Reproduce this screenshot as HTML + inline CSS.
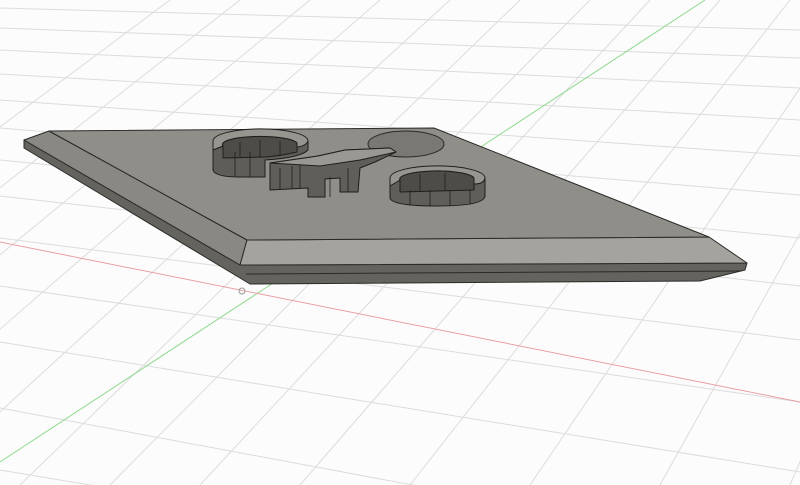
<!DOCTYPE html>
<html><head><meta charset="utf-8"><style>html,body{margin:0;padding:0;background:#fff;width:800px;height:485px;overflow:hidden}</style></head>
<body>
<svg width="800" height="485" viewBox="0 0 800 485" xmlns="http://www.w3.org/2000/svg" style="display:block">
<rect width="800" height="485" fill="#fcfcfc"/>
<g stroke="#dcdcdc" stroke-width="1" fill="none">
<line x1="0" y1="8" x2="800" y2="30"/>
<line x1="0" y1="28" x2="800" y2="58"/>
<line x1="0" y1="50" x2="800" y2="88"/>
<line x1="0" y1="74" x2="800" y2="120"/>
<line x1="0" y1="100" x2="800" y2="156"/>
<line x1="0" y1="128" x2="800" y2="195"/>
<line x1="0" y1="160" x2="800" y2="238"/>
<line x1="0" y1="196" x2="800" y2="286"/>
<line x1="0" y1="238" x2="800" y2="340"/>
<line x1="0" y1="286" x2="800" y2="402"/>
<line x1="0" y1="342" x2="800" y2="472"/>
<line x1="0" y1="408" x2="600" y2="520"/>
<line x1="0" y1="470" x2="300" y2="520"/>
<line x1="20" y1="485" x2="520" y2="0"/>
<line x1="110" y1="485" x2="590" y2="0"/>
<line x1="200" y1="485" x2="650" y2="0"/>
<line x1="300" y1="485" x2="720" y2="0"/>
<line x1="410" y1="485" x2="790" y2="0"/>
<line x1="530" y1="485" x2="860" y2="0"/>
<line x1="660" y1="485" x2="930" y2="0"/>
<line x1="790" y1="485" x2="1000" y2="0"/>
<line x1="-80" y1="485" x2="450" y2="0"/>
<line x1="-180" y1="485" x2="380" y2="0"/>
<line x1="-280" y1="485" x2="310" y2="0"/>
<line x1="-380" y1="485" x2="240" y2="0"/>
<line x1="-480" y1="485" x2="170" y2="0"/>
</g>
<line x1="0" y1="462" x2="705" y2="0" stroke="#8fd98f" stroke-width="1"/>
<line x1="0" y1="242" x2="800" y2="402" stroke="#e9a0a0" stroke-width="1"/>
<circle cx="242" cy="291" r="3" fill="none" stroke="#999"/>
<g stroke="#2a2a28" stroke-width="1" stroke-linejoin="round">
<polygon points="24,140 240,265 747,263 745,270 700,281 250,284 24,148" fill="#65635e"/>
<line x1="246" y1="274" x2="742" y2="271"/>
<polygon points="24,140 49,131 247,240 240,265" fill="#8a8882"/>
<polygon points="247,240 709,237 747,263 240,265" fill="#a5a39d"/>
<polygon points="49,131 434,128 709,237 247,240" fill="#908e88"/>
</g>
<ellipse cx="406" cy="144" rx="38" ry="13" fill="#7a7873" stroke="#2a2a28"/>
<g stroke="#1e1e1c" stroke-width="1" stroke-linejoin="round">
<!-- left C -->
<path d="M213,141 L213,170 Q215,177 240,177 L265,177 L265,160 Q300,158 308,150 L308,141 Z" fill="#5f5d59"/>
<path d="M223,146 A37,8 0 0 1 297,143 L297,152 Q280,156 265,157 L223,158 Z" fill="#4e4c48"/>
<path d="M213,141 A47,12 0 0 1 308,141 Q306,146 297,147 L297,143 A37,8 0 0 0 223,146 L213,150 Z" fill="#97958f"/>
<!-- middle -->
<path d="M270,163 L318,156 L345,150 L390,148 L396,152 L375,162 L360,168 L358,192 L340,192 L340,178 L325,179 L325,197 L308,197 L308,188 L270,190 Z" fill="#605e5a"/>
<path d="M270,163 L318,156 L345,150 L390,148 L396,152 L360,160 L320,166 Z" fill="#9a9892"/>
<!-- right C -->
<path d="M390,178 L390,198 Q392,206 437,206 Q484,206 485,196 L485,178 Z" fill="#605e5a"/>
<path d="M400,180 A37,8 0 0 1 474,178 L474,190 L400,192 Z" fill="#4e4c48"/>
<path d="M390,178 A47,12 0 0 1 485,178 Q484,184 474,184 L474,178 A37,8 0 0 0 400,180 L390,186 Z" fill="#97958f"/>
</g>
<g stroke="#1e1e1c" stroke-width="0.8">
<line x1="235" y1="152" x2="235" y2="176"/><line x1="250" y1="152" x2="250" y2="177"/>
<line x1="240" y1="142" x2="240" y2="157"/><line x1="260" y1="140" x2="260" y2="157"/><line x1="280" y1="141" x2="280" y2="155"/>
<line x1="280" y1="168" x2="280" y2="189"/><line x1="292" y1="166" x2="292" y2="189"/><line x1="300" y1="165" x2="300" y2="188"/>
<line x1="330" y1="177" x2="330" y2="197"/><line x1="348" y1="168" x2="348" y2="192"/>
<line x1="410" y1="190" x2="410" y2="205"/><line x1="430" y1="190" x2="430" y2="206"/><line x1="450" y1="190" x2="450" y2="206"/><line x1="470" y1="190" x2="470" y2="204"/>
<line x1="420" y1="174" x2="420" y2="191"/><line x1="445" y1="173" x2="445" y2="191"/>
</g>
</svg>
</body></html>
